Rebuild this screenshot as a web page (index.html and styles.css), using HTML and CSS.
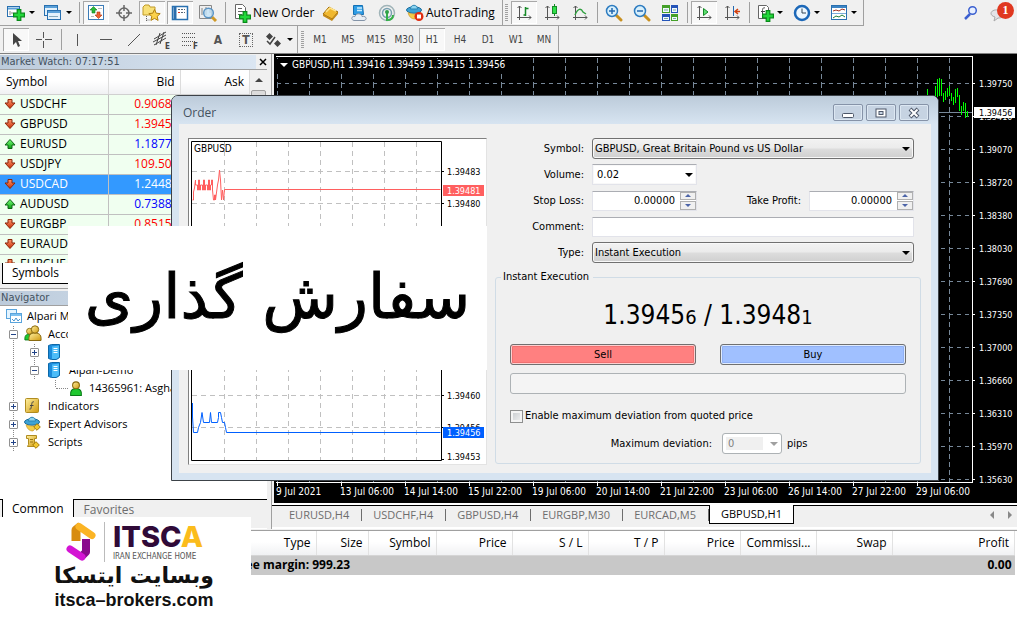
FILE: index.html
```html
<!DOCTYPE html>
<html lang="en">
<head>
<meta charset="utf-8">
<title>Trading terminal</title>
<link rel="stylesheet" href="styles.css">
</head>
<body>
<svg class="defs" aria-hidden="true">
  <defs>
    <linearGradient id="gRed" x1="0" y1="0" x2="0" y2="1"><stop offset="0" stop-color="#ff9a70"/><stop offset="1" stop-color="#c42c04"/></linearGradient>
    <linearGradient id="gGreen" x1="0" y1="0" x2="0" y2="1"><stop offset="0" stop-color="#7dff7d"/><stop offset="1" stop-color="#08a010"/></linearGradient>
    <linearGradient id="gGold" x1="0" y1="0" x2="1" y2="1"><stop offset="0" stop-color="#fff0a0"/><stop offset="1" stop-color="#d09a10"/></linearGradient>
    <symbol id="down" viewBox="0 0 12 12"><path d="M4 1.500h4v3.500h3L6 10.500 1 5h3z" fill="url(#gRed)" stroke="#8c2408"/></symbol>
    <symbol id="up" viewBox="0 0 12 12"><path d="M4 10.500h4V7h3L6 1.500 1 7h3z" fill="url(#gGreen)" stroke="#0a6414"/></symbol>
    <symbol id="plus" viewBox="0 0 10 10"><path d="M3.500.5h3v3h3v3h-3v3h-3v-3h-3v-3h3z" fill="#22d83a" stroke="#078a18"/></symbol>
    <symbol id="axes" viewBox="0 0 18 18"><path d="M4.500 2v14M2 13.500h14M2.500 4l2-2 2 2M14 11.500l2 2-2 2" fill="none" stroke="#555"/></symbol>
    <symbol id="lens" viewBox="0 0 18 18"><path d="M11 11l5 5" stroke="#c89020" stroke-width="3" stroke-linecap="round"/><circle cx="7" cy="7" r="5.500" fill="#d8f0fc" stroke="#2e7cc0" stroke-width="1.500"/></symbol>
    <symbol id="man" viewBox="0 0 12 14"><path d="M1 13.500c-.5-4 1-6.500 5-6.500s5.500 2.500 5 6.500z" fill="#20c830" stroke="#0a7a18"/><circle cx="6" cy="4" r="3.200" fill="url(#gGold)" stroke="#8a6a10"/></symbol>
    <symbol id="server" viewBox="0 0 14 16"><path d="M1.500 1.500l3-1h8v13l-3 2h-5l-3-1z" fill="#1c8cdc" stroke="#0c68a8"/><path d="M5 2.500l7-1v11.500l-3 2H5z" fill="#4cbcf8"/><path d="M6.500 4.500h4M6.500 6.500h4M6.500 8.500h4" stroke="#fff"/></symbol>
    <symbol id="ufo" viewBox="0 0 18 16"><ellipse cx="8" cy="6" rx="7.500" ry="3.200" fill="#3ea2d4" stroke="#1a6c9c"/><path d="M4.500 5c0-5 7-5 7 0z" fill="#8cd4f0" stroke="#2a84b4"/><path d="M2 8.500c1 4 3 6.500 7 6.500l6-6.500c-4 2-9 2-13 0z" fill="#f4cc48" stroke="#c09020" stroke-width=".6"/></symbol>
    <symbol id="diamond" viewBox="0 0 8 8"><path d="M4 .7L7.300 4 4 7.300.7 4z" fill="#f2c830" stroke="#a07808"/></symbol>
  </defs>
</svg>

<header class="toolbars">
  <div class="toolbar main-bar">
    <div class="strip">
      <button class="tool drop" aria-label="New chart"><svg width="20" height="18"><rect x="1.500" y="2.500" width="12" height="10" fill="#fff" stroke="#2870b0"/><path d="M2 4.500h11" stroke="#5aa0d8" stroke-width="2"/><path d="M4 7v4M6 8v2" stroke="#888"/><use href="#plus" x="7" y="5" width="12" height="12"/></svg></button>
      <button class="tool drop" aria-label="Profiles"><svg width="20" height="18"><rect x="1.500" y="1.500" width="13" height="10" fill="#e4f2fc" stroke="#2870b0"/><path d="M2 3h12" stroke="#5aa0d8" stroke-width="2"/><rect x="4.500" y="6.500" width="13" height="9" fill="#e4f2fc" stroke="#2870b0"/><path d="M5 8h12" stroke="#5aa0d8" stroke-width="2"/><path d="M6 12.500h9" stroke="#8ab"/></svg></button>
      <span class="sep"></span>
      <button class="tool pressed" aria-label="Market Watch"><svg width="18" height="18"><rect x="1.500" y="1.500" width="15" height="14" fill="#fff" stroke="#3c7cb8"/><path d="M6.500 2.500L10 6H8v3H5V6H3z" fill="#2ab83a" stroke="#108020" stroke-width=".6"/><path d="M11.500 14.500L8 11h2V8h3v3h2z" fill="#f06030" stroke="#b03008" stroke-width=".6"/><path d="M11 4.500h4M4 12.500h3" stroke="#bbb"/></svg></button>
      <button class="tool" aria-label="Data Window"><svg width="18" height="18" fill="none" stroke="#666"><circle cx="9" cy="9" r="5" stroke-width="1.500"/><path d="M9 1v6M9 11v6M1 9h6M11 9h6" stroke-width="1.500"/></svg></button>
      <button class="tool pressed" aria-label="Navigator"><svg width="20" height="18"><path d="M1 3l2-2h4l1 2h5v8H1z" fill="#f8e078" stroke="#c09a28"/><path d="M4.500 12v5M4.500 16h3" stroke="#666" stroke-dasharray="1 1"/><path d="M12.500 5.500l1.700 3.700 4 .4-3 2.800.9 4-3.600-2-3.600 2 .9-4-3-2.800 4-.4z" fill="#fcd24c" stroke="#b08010"/></svg></button>
      <button class="tool pressed" aria-label="Terminal"><svg width="18" height="18"><rect x="1.500" y="2.500" width="15" height="13" fill="#fff" stroke="#2870b0" stroke-width="1.500"/><path d="M4 3v12" stroke="#2a6cac" stroke-width="3"/><path d="M7 5.500h7M7 8.500h7" stroke="#567" stroke-dasharray="2 1"/><path d="M7 8.500h2" stroke="#e03020"/></svg></button>
      <button class="tool" aria-label="Strategy Tester"><svg width="20" height="18"><path d="M1.500 1.500h12v13h-12zM4 4v7M8 3v8M12 4v5" fill="#eee" stroke="#888"/><path d="M14 13l4 4" stroke="#d09a28" stroke-width="3"/><circle cx="10.500" cy="9" r="4.800" fill="#c4e4f8" fill-opacity=".8" stroke="#5a94c4" stroke-width="1.500"/></svg></button>
      <span class="sep"></span>
      <button class="tool labelled order-tool"><svg width="18" height="20"><path d="M2.500 1.500h7l3 3v11h-10z" fill="#fff" stroke="#666"/><path d="M5 5.500h4M5 8.500h5M5 11.500h4" stroke="#666"/><use href="#plus" x="6" y="8" width="12" height="12"/></svg>New Order</button>
      <button class="tool" aria-label="MetaEditor"><svg width="20" height="18"><path d="M2 10l6-7 9 5-6 7z" fill="#f0b830" stroke="#a06c08"/><path d="M2 10l9 5v2l-9-5zM11 15l6-7v2l-6 7z" fill="#c48a18"/><path d="M5 8l4-4 6 3" fill="none" stroke="#ffe48c" stroke-width="1.500"/></svg></button>
      <button class="tool" aria-label="Virtual hosting"><svg width="18" height="18"><path d="M3.500 1.500h9l1 9h-10z" fill="#2e9ce4" stroke="#1470b4"/><path d="M7 4h5M7 6.500h5" stroke="#c8ecff" stroke-width="1.500"/><path d="M4 16.500c-4-1-2-5 1-4 1-4 7-3 7 0 4-1 6 3 2 4z" fill="#e8eef4" stroke="#8494a8"/></svg></button>
      <button class="tool" aria-label="Signals"><svg width="18" height="18" fill="none"><circle cx="9" cy="9" r="7.500" stroke="#a0b4b8" stroke-width="1.500"/><circle cx="9" cy="9" r="4.500" stroke="#78a0b0" stroke-width="1.500"/><path d="M9 8v8c4 0 6-2 6-5" stroke="#34b048" stroke-width="2"/><circle cx="9" cy="8" r="2" fill="#30a048"/></svg></button>
      <button class="tool labelled auto-tool"><svg width="18" height="18"><use href="#ufo" width="18" height="16"/><circle cx="13" cy="12.500" r="4.500" fill="#e02c10"/><rect x="11" y="10.500" width="4" height="4" fill="#fff"/></svg>AutoTrading</button>
    </div>
    <div class="strip">
      <span class="grip"></span>
      <button class="tool pressed" aria-label="Bar chart"><svg width="18" height="18"><use href="#axes" width="18" height="18"/><path d="M10.500 3v9M10.500 11h-2M10.500 4.500h3" stroke="#168a28" fill="none" stroke-width="1.500"/></svg></button>
      <button class="tool" aria-label="Candlesticks"><svg width="18" height="18"><use href="#axes" width="18" height="18"/><path d="M11.500 0v12" stroke="#168a28"/><rect x="9.500" y="2.500" width="4" height="7" fill="#2ee048" stroke="#168a28"/></svg></button>
      <button class="tool" aria-label="Line chart"><svg width="18" height="18"><use href="#axes" width="18" height="18"/><path d="M4 11c3-7 6-7 8-3l3 2" stroke="#30a040" stroke-width="1.500" fill="none"/></svg></button>
      <span class="sep"></span>
      <button class="tool" aria-label="Zoom in"><svg width="18" height="18"><use href="#lens" width="18" height="18"/><path d="M4 7h6M7 4v6" stroke="#2468b0" stroke-width="1.500"/></svg></button>
      <button class="tool" aria-label="Zoom out"><svg width="18" height="18"><use href="#lens" width="18" height="18"/><path d="M4 7h6" stroke="#2468b0" stroke-width="1.500"/></svg></button>
      <button class="tool" aria-label="Tile windows"><svg width="18" height="18"><path d="M1 1h8v8H1zM10 10h7v7h-7z" fill="#44a028"/><path d="M10 1h7v8h-7zM1 10h8v7H1z" fill="#2454b8"/><path d="M2 4h6v4H2zM11 4h5v4h-5zM2 13h6v3H2zM11 13h5v3h-5z" fill="#f0f8ff"/><path d="M3 6h4M12 6h3M3 14.500h4M12 14.500h3" stroke="#7a9"/></svg></button>
      <span class="sep"></span>
      <button class="tool pressed" aria-label="Auto scroll"><svg width="18" height="18"><use href="#axes" width="18" height="18"/><path d="M8.500 4.500l4.500 3.500-4.500 3.500z" fill="#5ce070" stroke="#168a28"/></svg></button>
      <button class="tool" aria-label="Chart shift"><svg width="18" height="18"><use href="#axes" width="18" height="18"/><path d="M10.500 2v10" stroke="#2468b0"/><path d="M17 7.500h-4M15 5l-3 2.500 3 2.500" stroke="#d04010" fill="none" stroke-width="1.500"/></svg></button>
      <span class="sep"></span>
      <button class="tool drop" aria-label="Indicators"><svg width="18" height="18"><path d="M2.500 1.500h8l2 2v11h-10z" fill="#fff" stroke="#666"/><path d="M9 4c-2-1-2.500 1-2.500 3v5M5 7.500h4" fill="none" stroke="#444"/><use href="#plus" x="6" y="6" width="12" height="12"/></svg></button>
      <button class="tool drop" aria-label="Periods"><svg width="18" height="18"><circle cx="9" cy="9" r="7" fill="#eef8ff" stroke="#1c68b8" stroke-width="2.500"/><path d="M9 4.500V9h4" fill="none" stroke="#345"/></svg></button>
      <button class="tool drop" aria-label="Templates"><svg width="18" height="18"><rect x="1.500" y="1.500" width="15" height="14" fill="#fff" stroke="#2870b0"/><path d="M2 3h14" stroke="#3c84c4" stroke-width="2"/><path d="M3 7l3-1 3 1 3-2 3 1" fill="none" stroke="#a03020"/><path d="M2 9.500h14" stroke="#7aacd8"/><path d="M3 14l3-2 3 1 3-2 3 2" fill="none" stroke="#208038"/></svg></button>
    </div>
    <div class="status-tools">
      <button class="tool" aria-label="Search"><svg width="16" height="16"><path d="M2 14l5-5" stroke="#3c60d0" stroke-width="2.500"/><circle cx="9.500" cy="5.500" r="3.800" fill="#e8f0ff" stroke="#3c60d0" stroke-width="1.500"/></svg></button>
      <button class="tool notice" aria-label="Notifications"><svg width="18" height="18"><path d="M5 17l1-4C-1 11 2 5 9 6s9 8 0 8z" fill="#e4e4e8" stroke="#aaa"/></svg><b class="badge">1</b></button>
    </div>
  </div>
  <div class="toolbar draw-bar">
    <div class="strip">
      <button class="tool pressed" aria-label="Cursor"><svg width="18" height="18"><path d="M6 2v12l3-3 2 5 2-1-2-5h4z" fill="#444"/></svg></button>
      <button class="tool" aria-label="Crosshair"><svg width="18" height="18"><path d="M8.500 1v6M8.500 10v7M1 8.500h6M10 8.500h7" stroke="#555"/></svg></button>
      <span class="sep"></span>
      <button class="tool" aria-label="Vertical line"><svg width="18" height="18"><path d="M8.500 3v12" stroke="#555"/></svg></button>
      <button class="tool" aria-label="Horizontal line"><svg width="18" height="18"><path d="M3 8.500h12" stroke="#555"/></svg></button>
      <button class="tool" aria-label="Trendline"><svg width="18" height="18"><path d="M3 15L15 3" stroke="#555"/></svg></button>
      <button class="tool" aria-label="Equidistant channel"><svg width="20" height="20"><path d="M2 9L14 2M2 15L14 8M4 15L8 3M8 14l4-12M1 12l13-7" stroke="#444"/><text class="glyph" x="13" y="19">E</text></svg></button>
      <button class="tool" aria-label="Fibonacci retracement"><svg width="20" height="20"><path d="M2 3.500h14M2 7.500h14M2 11.500h14M2 15.500h9" stroke="#555" stroke-dasharray="1 1"/><text class="glyph" x="13" y="19">F</text></svg></button>
      <button class="tool text-tool" aria-label="Text">A</button>
      <button class="tool text-tool" aria-label="Text label"><span class="dotted">T</span></button>
      <button class="tool drop" aria-label="Arrows"><svg width="20" height="18"><path d="M5.500 2l3.500 3.500L5.500 9 2 5.500zM13.500 9l3.500 3.500-3.500 3.500-3.500-3.500z" fill="#444"/><path d="M3 10l3 3 5-7" stroke="#444" fill="none" stroke-width="1.500"/></svg></button>
    </div>
    <div class="strip periods">
      <span class="grip"></span>
      <button class="tool">M1</button><button class="tool">M5</button><button class="tool">M15</button><button class="tool">M30</button><button class="tool pressed">H1</button><button class="tool">H4</button><button class="tool">D1</button><button class="tool">W1</button><button class="tool">MN</button>
    </div>
  </div>
</header>

<main class="workspace">
  <aside class="side">
    <section class="watch">
      <div class="panel-title"><span>Market Watch: 07:17:51</span><button class="close" aria-label="Close"><svg width="8" height="8"><path d="M1 1l6 6M7 1L1 7" stroke="#000" stroke-width="1.500"/></svg></button></div>
      <div class="watch-body">
        <table class="quotes">
          <thead><tr><th>Symbol</th><th>Bid</th><th>Ask</th></tr></thead>
          <tbody>
            <tr><td><svg><use href="#down"/></svg>USDCHF</td><td class="fall">0.90682</td><td class="fall"></td></tr>
            <tr><td><svg><use href="#down"/></svg>GBPUSD</td><td class="fall">1.39456</td><td class="fall"></td></tr>
            <tr><td><svg><use href="#up"/></svg>EURUSD</td><td class="rise">1.18773</td><td class="rise"></td></tr>
            <tr><td><svg><use href="#down"/></svg>USDJPY</td><td class="fall">109.504</td><td class="fall"></td></tr>
            <tr class="selected"><td><svg><use href="#down"/></svg>USDCAD</td><td>1.24483</td><td></td></tr>
            <tr><td><svg><use href="#up"/></svg>AUDUSD</td><td class="rise">0.73887</td><td class="rise"></td></tr>
            <tr><td><svg><use href="#down"/></svg>EURGBP</td><td class="fall">0.85152</td><td class="fall"></td></tr>
            <tr><td><svg><use href="#down"/></svg>EURAUD</td><td class="fall"></td><td class="fall"></td></tr>
            <tr><td><svg><use href="#down"/></svg>EURCHF</td><td class="fall"></td><td class="fall"></td></tr>
          </tbody>
        </table>
        <div class="scroll"><i class="scroll-up"></i><i class="thumb"></i></div>
      </div>
      <div class="side-tabs"><button class="side-tab active">Symbols</button></div>
    </section>
    <section class="navigator">
      <div class="panel-title"><span>Navigator</span></div>
      <ul class="tree">
        <li><svg class="node" width="18" height="16"><rect x="1.500" y="1.500" width="10" height="9" fill="#e4f4ff" stroke="#5aa4dc"/><rect x="5.500" y="5.500" width="11" height="9" fill="#fff" stroke="#5aa4dc"/><path d="M6 7h10" stroke="#7cc0f0" stroke-width="2"/><path d="M7 11l2 2 2-3 2 3 2-2" stroke="#4a94d0" fill="none"/></svg><span>Alpari MT4</span></li>
        <li class="l1"><i class="box minus"></i><svg class="node" width="18" height="18"><use href="#man" x="0" y="2" width="11" height="14"/><path d="M5 15.500c-.5-5 1-7.500 6-7.500s6.500 2.500 6 7.500z" fill="url(#gGold)" stroke="#8a6a10"/><circle cx="11" cy="4.500" r="3.700" fill="url(#gGold)" stroke="#8a6a10"/></svg><span>Accounts</span></li>
        <li class="l2"><i class="box"></i><svg class="node" width="14" height="16"><use href="#server" width="14" height="16"/></svg><span></span></li>
        <li class="l2"><i class="box minus"></i><svg class="node" width="14" height="16"><use href="#server" width="14" height="16"/></svg><span>Alpari-Demo</span></li>
        <li class="l3"><svg class="node" width="14" height="15"><use href="#man" width="14" height="15"/></svg><span>14365961: Asghar</span></li>
        <li class="l1"><i class="box"></i><svg class="node" width="18" height="16"><rect x="1.500" y=".5" width="13" height="14" rx="1" fill="url(#gGold)" stroke="#b08c20"/><path d="M10 4c-2-1-2 1-2.500 3.500S7 12 5.500 11M6 7.500h3.500" fill="none" stroke="#444"/></svg><span>Indicators</span></li>
        <li class="l1"><i class="box"></i><svg class="node" width="18" height="16"><use href="#ufo" width="18" height="16"/><use href="#diamond" x="9" y="7" width="8" height="8"/></svg><span>Expert Advisors</span></li>
        <li class="l1"><i class="box"></i><svg class="node" width="18" height="16"><path d="M2.500 1.500h10v3h-2v8h-7l1-2v-6h-2z" fill="url(#gGold)" stroke="#b08c20"/><path d="M6 5.500h3M6 8h3" stroke="#987414"/><use href="#diamond" x="8" y="7" width="8" height="8"/></svg><span>Scripts</span></li>
      </ul>
      <div class="side-tabs bottom"><button class="side-tab active">Common</button><button class="side-tab">Favorites</button></div>
    </section>
  </aside>

  <section class="chart-area">
    <div class="chart">
      <div class="plot">
        <svg class="grid-lines" width="100%" height="100%">
          <defs><pattern id="cell" width="32" height="33" patternUnits="userSpaceOnUse" x="1" y="26"><path d="M0 .5h32" stroke="#778899" stroke-dasharray="4 4"/><path d="M.5 0v33" stroke="#778899" stroke-dasharray="5 3"/></pattern></defs>
          <rect width="100%" height="100%" fill="url(#cell)"/>
        </svg>
        <svg class="bars" width="48" height="80"><path d="M0 55.500h48" stroke="#778899"/><path d="M3.500 32v8M11.500 29v18M13.500 22v18M15.500 21v18M17.500 22v17M19.500 36v9M21.500 34v9M23.500 31v9M25.500 29v10M27.500 36v8M29.500 40v8M31.500 32v14M33.500 31v9M35.500 38v16M37.500 49v9M39.500 45v9M41.500 46v15M43.500 54v6" stroke="#0f0"/></svg>
        <div class="chart-title"><i class="tri"></i><span>GBPUSD,H1 1.39416 1.39459 1.39415 1.39456</span></div>
      </div>
      <ol class="prices"><li>1.39750</li><li>1.39410</li><li>1.39070</li><li>1.38720</li><li>1.38380</li><li>1.38030</li><li>1.37690</li><li>1.37350</li><li>1.37000</li><li>1.36660</li><li>1.36310</li><li>1.35970</li><li>1.35630</li><li class="current">1.39456</li></ol>
      <ol class="times"><li>9 Jul 2021</li><li>13 Jul 06:00</li><li>14 Jul 14:00</li><li>15 Jul 22:00</li><li>19 Jul 06:00</li><li>20 Jul 14:00</li><li>21 Jul 22:00</li><li>23 Jul 06:00</li><li>26 Jul 14:00</li><li>27 Jul 22:00</li><li>29 Jul 06:00</li></ol>
    </div>
    <nav class="chart-tabs">
      <button>EURUSD,H4</button><button>USDCHF,H4</button><button>GBPUSD,H4</button><button>EURGBP,M30</button><button>EURCAD,M5</button><button class="active">GBPUSD,H1</button>
      <span class="tab-arrows"><i class="left"></i><i class="right"></i></span>
    </nav>
  </section>
</main>

<section class="terminal">
  <table class="trades">
    <colgroup><col class="c-first"><col class="c-size"><col class="c-symbol"><col class="c-num"><col class="c-num"><col class="c-num"><col class="c-num"><col class="c-num"><col class="c-num"><col></colgroup>
    <thead><tr><th>Type</th><th>Size</th><th>Symbol</th><th>Price</th><th>S / L</th><th>T / P</th><th>Price</th><th>Commissi...</th><th>Swap</th><th>Profit</th></tr></thead>
    <tbody><tr><td colspan="2">Free margin: 999.23</td><td colspan="7"></td><td>0.00</td></tr></tbody>
  </table>
</section>

<section class="dialog" role="dialog" aria-labelledby="dialog-title">
  <header class="dialog-bar">
    <h2 id="dialog-title">Order</h2>
    <button aria-label="Minimize"><svg width="14" height="12"><rect x="1.500" y="6.500" width="11" height="4" rx="1" fill="#fff" stroke="#4c5668"/></svg></button>
    <button aria-label="Maximize"><svg width="14" height="12"><rect x="2" y="2" width="10" height="8" fill="#fff" stroke="#4c5668"/><rect x="5" y="4.500" width="4" height="3" fill="#c8d4e4" stroke="#4c5668"/></svg></button>
    <button aria-label="Close"><svg width="14" height="12"><path d="M3 2l8 8M11 2l-8 8" stroke="#4c5668" stroke-width="4"/><path d="M3.500 2.500l7 7M10.500 2.500l-7 7" stroke="#fff" stroke-width="2"/></svg></button>
  </header>
  <div class="dialog-body">
    <figure class="ticks">
      <svg width="297" height="324">
        <g stroke="#c0c0c0" stroke-dasharray="5 4" fill="none">
          <path d="M35.500 3v318M67.500 3v318M99.500 3v318M131.500 3v318M163.500 3v318M195.500 3v318M227.500 3v318"/>
          <path d="M3 32.500h249M3 64.500h249M3 96.500h249M3 128.500h249M3 160.500h249M3 192.500h249M3 224.500h249M3 256.500h249M3 288.500h249"/>
        </g>
        <path d="M2.500 2.500h250v319H2.500zM252 32.500h3M252 64.500h3M252 256.500h3M252 288.500h3M252 320.500h3" fill="none" stroke="#000"/>
        <path d="M3.500 61h1v-8l1-4 1-8v5h2v5h1V41h1v10h1v-5h2v5h1V41h1v10h1v-5h2v5h1V41h1v10h1v-5h1V41h1v10l1 10h1v-5h1v5l2-15 1-5 1-10 1 10 1 20 1-10 1 10 1-10.500h216" fill="none" stroke="#ff5f5f" stroke-linejoin="bevel"/>
        <path d="M3.500 264v14l1 15.500h4l1-5 2-5 1.500-10 1.500 10h6l1-10 1 10h6l1-5v-5h2l1 5 1 5h2l1 5 1 5h214" fill="none" stroke="#0060ff"/>
        <g class="axis"><text class="pair" x="5" y="13">GBPUSD</text><text x="258" y="36">1.39483</text><text x="258" y="68">1.39480</text><text x="258" y="260">1.39460</text><text x="258" y="292">1.39456</text><text x="258" y="321">1.39453</text></g>
        <rect x="254" y="46" width="41" height="11" fill="#ff5f5f"/><rect x="254" y="288" width="41" height="11" fill="#0060ff"/>
        <g class="axis on"><text x="258" y="55">1.39481</text><text x="258" y="297">1.39456</text></g>
      </svg>
    </figure>
    <form class="order" onsubmit="return false">
      <div class="fields">
        <label for="symbol">Symbol:</label>
        <span class="combo wide"><select id="symbol"><option>GBPUSD, Great Britain Pound vs US Dollar</option></select></span>
        <label for="volume">Volume:</label>
        <span class="combo plain"><select id="volume"><option>0.02</option></select></span>
        <label class="first" for="sl">Stop Loss:</label>
        <span class="spin"><input id="sl" value="0.00000"><span class="steps"><i></i><i></i></span></span>
        <label for="tp">Take Profit:</label>
        <span class="spin"><input id="tp" value="0.00000"><span class="steps"><i></i><i></i></span></span>
        <label for="comment">Comment:</label>
        <input class="wide line" id="comment">
        <label for="type">Type:</label>
        <span class="combo wide"><select id="type"><option>Instant Execution</option></select></span>
      </div>
      <fieldset class="execution">
        <legend>Instant Execution</legend>
        <p class="price">1.3945<small>6</small> / 1.3948<small>1</small></p>
        <div class="deal"><button class="sell">Sell</button><button class="buy">Buy</button></div>
        <output class="message"></output>
        <label class="check"><input type="checkbox">Enable maximum deviation from quoted price</label>
        <div class="deviation"><label for="dev">Maximum deviation:</label><span class="combo off"><select id="dev" disabled><option>0</option></select></span><span>pips</span></div>
      </fieldset>
    </form>
  </div>
</section>

<div class="caption" lang="fa" dir="rtl">سفارش گذاری</div>

<div class="brand">
  <div class="brand-row">
    <svg width="32" height="40"><path d="M11 19V8l5-4" fill="none" stroke="#d88c10" stroke-width="9" stroke-linejoin="round" stroke-linecap="butt"/><path d="M14 4.500l13 9" stroke="#fbb424" stroke-width="7" stroke-linecap="round"/><path d="M21 17v13l-5 5" fill="none" stroke="#8a0a8c" stroke-width="8" stroke-linejoin="round"/><path d="M5 27l12 8" stroke="#d414d4" stroke-width="7" stroke-linecap="round"/></svg>
    <div class="brand-words"><b>ITSC<span>A</span></b><small>IRAN EXCHANGE HOME</small></div>
  </div>
  <p class="brand-fa" lang="fa" dir="rtl">وبسایت ایتسکا</p>
  <p class="brand-url">itsca–brokers.com</p>
</div>
</body>
</html>
```
FILE: styles.css
```css
* { box-sizing: border-box; }
body {
  margin: 0; min-height: 100vh; position: relative; overflow: hidden;
  display: flex; flex-direction: column; background: #f0f0f0; color: #000;
  font: 12px/18px "Open Sans", "Noto Sans", sans-serif;
}
button, input, select { font: inherit; color: inherit; margin: 0; }
button { padding: 0; border: 0; background: none; }
ul, ol, p, h2, figure { margin: 0; padding: 0; list-style: none; }
.defs { position: absolute; width: 0; height: 0; }

/* toolbars */
.toolbars { background: #f0f0f0; border-bottom: 1px solid #808080; }
.toolbar { display: flex; height: 26px; }
.draw-bar { height: 27px; }
.strip { display: flex; align-items: center; padding-left: 2px; border-right: 1px solid #a0a0a0; border-bottom: 1px solid #a0a0a0; }
.draw-bar .strip { border-bottom: 0; }
.draw-bar .strip:last-child { padding-left: 3px; }
.tool { width: 28px; height: 25px; display: flex; align-items: center; justify-content: center; flex: none; }
.tool.pressed { width: 26px; height: 23px; margin: 0 1px; background: #f8f8f8; box-shadow: inset 1px 1px #a8a8a8, inset -1px -1px #fff; }
.tool.drop { width: 37px; padding-left: 4px; justify-content: flex-start; gap: 3px; }
.tool.drop::after { content: ""; border: 3px solid transparent; border-top-color: #000; border-bottom: 0; }
.tool.labelled { width: auto; justify-content: flex-start; padding-left: 5px; gap: 2px; }
.order-tool { min-width: 89px; }
.auto-tool { min-width: 101px; }
.sep { width: 6px; height: 21px; background: linear-gradient(#a0a0a0, #a0a0a0) 3px 0 / 1px 100% no-repeat; }
.grip { width: 3px; height: 18px; margin: 0 2px 0 0; background: repeating-linear-gradient(#a0a0a0 0 1px, transparent 1px 2px); }
.status-tools { display: flex; margin-left: auto; }
.notice { position: relative; width: 32px; justify-content: flex-start; padding-left: 4px; }
.badge { position: absolute; right: 3px; top: 2px; width: 17px; height: 17px; border-radius: 50%; background: #e03820; color: #fff; font: bold 12px/17px "Liberation Serif", serif; text-align: center; }
.glyph { font: bold 8px "DejaVu Sans Condensed", sans-serif; fill: #444; }
.text-tool { color: #555; font: bold 12px "DejaVu Sans Condensed", sans-serif; }
.dotted { border: 1px dotted #666; padding: 0 2px; line-height: 12px; }
.periods .tool { font: 10px "DejaVu Sans Condensed", sans-serif; color: #444; }

/* side panels */
.workspace { display: grid; grid-template-columns: 272px 1fr; }
.side { display: flex; flex-direction: column; padding-right: 4px; border-right: 1px solid #a0a0a0; }
.panel-title { display: flex; justify-content: space-between; align-items: center; height: 16px; padding-right: 0; border-bottom: 1px solid #a0a0a0; font: 11px/14px "DejaVu Sans Condensed", sans-serif; color: #44525f; }
.panel-title span { flex: 1; padding-left: 1px; background: linear-gradient(90deg, #bccbdb, #dbe6f2); }
.close { width: 11px; height: 14px; display: grid; place-items: center end; }
.watch-body { display: flex; height: 193px; overflow: hidden; background: #fff; }
.quotes { flex: 1; table-layout: fixed; border-collapse: collapse; align-self: flex-start; }
.quotes th { height: 24px; padding: 0 5px; text-align: right; font-weight: 400; background: linear-gradient(#fff 45%, #f0f1f3); border-right: 1px solid #dcdcdc; border-bottom: 1px solid #d0d0d0; }
.quotes th:first-child { width: 108px; padding-left: 6px; text-align: left; }
.quotes th:nth-child(2) { width: 72px; }
.quotes td { height: 20px; padding: 0 1px; line-height: 18px; background: #f0fff0; border-right: 1px solid #c0c0c0; border-bottom: 1px solid #c0c0c0; text-align: right; }
.quotes td:first-child { text-align: left; padding-left: 4px; }
.quotes svg { width: 12px; height: 12px; margin-right: 4px; vertical-align: -2px; }
.fall { color: #f00; }
.rise { color: #00f; }
.quotes .selected td { background: #3399ff; color: #fff; }
.scroll { width: 17px; background: #f0f0f0; display: flex; flex-direction: column; align-items: center; }
.scroll-up { margin: 8px 0; border: 4px solid transparent; border-top: 0; border-bottom-color: #444; }
.thumb { width: 15px; height: 60px; border: 1px solid #a0a0a0; border-radius: 2px; background: #dcdcdc; }
.side-tabs { display: flex; height: 26px; padding: 0 0 4px 2px; border-bottom: 1px solid #a0a0a0; }
.side-tab { padding: 0 9px; color: #6d6d6d; }
.side-tab.active { color: #000; background: #fff; border: 1px solid #000; border-top: 0; }
.navigator { flex: 1; display: flex; flex-direction: column; margin-top: 1px; }
.tree { flex: 1; padding-top: 1px; background: #fff; font-size: 11px; }
.tree li { display: flex; align-items: center; gap: 4px; height: 18px; padding-left: 5px; white-space: nowrap; }
.tree .l1 { padding-left: 9px; gap: 6px; background: repeating-linear-gradient(#fff 0 1px, transparent 1px 2px), linear-gradient(#888, #888) 13px 0 / 1px 100% no-repeat; }
.tree .l2, .tree .l3 { padding-left: 30px; gap: 8px; background: repeating-linear-gradient(#fff 0 1px, transparent 1px 2px), linear-gradient(#888, #888) 13px 0 / 1px 100% no-repeat, linear-gradient(#888, #888) 34px 0 / 1px 100% no-repeat; }
.tree .l3 { padding-left: 69px; gap: 6px; background: repeating-linear-gradient(#fff 0 1px, transparent 1px 2px), linear-gradient(#888, #888) 13px 0 / 1px 100% no-repeat, linear-gradient(#888, #888) 55px 0 / 1px 50% no-repeat; }
.tree .l3::before { content: ""; width: 12px; margin: 0 -5px 0 -13px; border-top: 1px dotted #888; }
.node { flex: none; }
.tree .box { width: 9px; height: 9px; border: 1px solid #919191; border-radius: 1px; background: linear-gradient(#248, #248) 1px 3px / 5px 1px no-repeat, linear-gradient(#248, #248) 3px 1px / 1px 5px no-repeat, #fff; }
.tree .box.minus { background: linear-gradient(#248, #248) 1px 3px / 5px 1px no-repeat, #fff; }
.side-tabs.bottom { height: 30px; padding-bottom: 8px; border-bottom: 1px solid #fff; background: linear-gradient(#000, #000) 0 0 / 100% 1px no-repeat; }
.bottom .side-tab { padding: 0 10px; }
.bottom .active { padding: 0 9px; }

/* price chart */
.chart-area { display: flex; flex-direction: column; padding-left: 2px; }
.chart { display: grid; grid-template-columns: 1fr 44px; grid-template-rows: 427px 20px; padding: 2px 0 0 2px; background: #000; color: #fff; font: 10px/12px "DejaVu Sans Condensed", sans-serif; }
.plot { position: relative; border: solid #fff; border-width: 1px 1px 1px 0; }
.grid-lines { display: block; }
.bars { position: absolute; right: 0; top: 0; }
.chart-title { position: absolute; left: 0; top: 2px; padding: 0 4px; display: flex; align-items: center; gap: 4px; background: #000; }
.tri { border: 4px solid transparent; border-top-color: #fff; border-bottom: 0; }
.prices { position: relative; padding-top: 11px; font-size: 9px; }
.prices li { height: 33px; display: flex; align-items: center; gap: 4px; }
.prices li::before { content: ""; width: 2px; border-top: 1px solid #fff; }
.prices .current { position: absolute; top: 51px; left: 1px; height: 11px; width: 41px; padding-left: 5px; background: #fff; color: #000; }
.prices .current::before { display: none; }
.times { grid-column: 1 / 3; display: flex; }
.times li { width: 64px; flex: none; padding-top: 3px; white-space: nowrap; background: linear-gradient(#fff, #fff) 1px 0 / 1px 3px no-repeat; }
.chart-tabs { display: flex; align-items: flex-start; height: 26px; padding-left: 7px; margin-left: -2px; border-top: 2px solid #fff; background: linear-gradient(#000, #000) 0 0 / 100% 1px no-repeat, #f0f0f0; border-bottom: 2px solid #fff; font-size: 11px; }
.chart-tabs button { padding: 0 13px 0 11px; height: 19px; color: #6d6d6d; background: linear-gradient(#6d6d6d, #6d6d6d) right 4px / 1px 12px no-repeat; }
.chart-tabs button:first-child { padding-left: 10px; }
.chart-tabs .active { color: #000; background: #fff; border: 1px solid #000; border-top: 0; padding: 0 11px; }
.tab-arrows { margin: 6px 5px 0 auto; display: flex; gap: 14px; }
.tab-arrows i { border: 4px solid transparent; }
.tab-arrows .left { border-right-color: #888; border-left: 0; }
.tab-arrows .right { border-left-color: #888; border-right: 0; }

/* terminal */
.terminal { flex: 1; margin-top: 1px; padding-right: 2px; border-top: 1px solid #a0a0a0; background: #fff; }
.trades { width: 100%; table-layout: fixed; border-collapse: collapse; }
.trades th { height: 24px; padding: 0 5px; text-align: right; font-weight: 400; background: linear-gradient(#fff 45%, #f0f1f3); border-right: 1px solid #e2e2e2; border-bottom: 1px solid #d5d5d5; }
.trades td { height: 20px; padding: 0 3px; font-weight: 700; text-align: right; background: #c8c8c8; }
.trades td:first-child { padding-right: 18px; }
.c-first { width: 316px; }
.c-size { width: 52px; }
.c-symbol { width: 68px; }
.c-num { width: 76px; }

/* order window */
.dialog { position: absolute; left: 171px; top: 95px; width: 768px; padding: 0 7px 7px; border: 1px solid #3c4248; border-radius: 7px 7px 0 0; background: #d7e4f1; font: 11px/14px "DejaVu Sans Condensed", sans-serif; }
.dialog-bar { display: flex; align-items: flex-start; gap: 3px; height: 28px; margin: 0 -7px; padding: 8px 9px 0 11px; border-radius: 6px 6px 0 0; background: linear-gradient(#bccbda, #d7e4f1); }
.dialog-bar h2 { flex: 1; font: 12px/18px "Open Sans", sans-serif; color: #44525f; }
.dialog-bar button { width: 30px; height: 17px; display: grid; place-items: center; border: 1px solid #8693a8; border-radius: 2px; box-shadow: inset 0 0 0 1px #dce7f2; background: #c6d3e2; }
.dialog-body { display: flex; gap: 8px; padding: 14px 17px 8px 9px; background: #f0f0f0; }
.ticks { width: 299px; height: 327px; border: 1px solid #808080; border-color: #808080 #e3e3e3 #e3e3e3 #808080; background: #fff; }
.ticks svg { display: block; }
.axis { font: 9px "DejaVu Sans Condensed", sans-serif; fill: #000; }
.axis .pair { font-size: 10px; }
.axis.on { fill: #fff; }
.order { flex: 1; min-width: 0; display: flex; flex-direction: column; }
.fields { display: grid; grid-template-columns: 97px minmax(0, 1fr) 112px minmax(0, 1fr); row-gap: 5px; grid-auto-rows: 21px; align-items: center; }
.fields label { text-align: right; padding-right: 8px; }
.fields .first { grid-column: 1; }
.fields .wide { grid-column: 2 / 5; }
.combo { position: relative; display: block; height: 21px; }
.combo select { appearance: none; display: block; width: 100%; height: 100%; padding: 0 2px; border: 1px solid #707070; border-radius: 3px; box-shadow: inset 0 0 0 1px #f8f8f8; background: linear-gradient(#f2f2f2, #ebebeb 48%, #dddddd 52%, #cfcfcf); }
.combo::after { content: ""; position: absolute; right: 4px; top: 9px; border: 4px solid transparent; border-top-color: #000; border-bottom: 0; }
.combo.plain select, .spin, .line { border: 1px solid #e2e3ea; border-top-color: #abadb3; border-radius: 1px; background: #fff; }
.combo.plain select { padding: 0 4px; }
.line { height: 20px; width: 100%; }
.spin { display: flex; height: 20px; padding: 0; }
.spin input { flex: 1; min-width: 0; border: 0; padding: 0 5px; text-align: right; background: none; }
.steps { width: 16px; display: flex; flex-direction: column; gap: 1px; }
.steps i { flex: 1; display: grid; place-items: center; border: 1px solid #b0b0b0; background: #f0f0f0; }
.steps i::after { content: ""; border: 3px solid transparent; border-bottom-color: #4c64a8; border-top: 0; }
.steps i:last-child::after { border: 3px solid transparent; border-top-color: #4c64a8; border-bottom: 0; }
.execution { min-width: 0; margin: 7px -7px 0 0; padding: 0 14px; border: 1px solid #d0dce6; border-radius: 3px; }
.execution legend { margin-left: -9px; padding: 0 4px 0 2px; }
.price { margin-top: 13px; text-align: center; font-size: 26px; line-height: 36px; }
.price small { font-size: 20px; }
.deal { display: grid; grid-template-columns: 1fr 1fr; gap: 24px; margin-top: 9px; }
.deal button { height: 21px; border: 1px solid #707070; border-radius: 3px; }
.deal .sell { background: #ff8080; box-shadow: inset 0 0 0 1px #ffd0d0, inset 0 0 0 2px #f07070; }
.deal .buy { background: #a0c0ff; box-shadow: inset 0 0 0 1px #e0ecff, inset 0 0 0 2px #90b0f4; }
.message { display: block; height: 21px; margin-top: 8px; border: 1px solid #adb2b5; border-radius: 3px; background: #f4f4f4; }
.check { display: flex; align-items: center; gap: 2px; margin-top: 15px; }
.check input { appearance: none; width: 13px; height: 13px; border: 1px solid #8e8f8f; box-shadow: inset 0 0 0 2px #f4f4f4; background: linear-gradient(135deg, #c4c8cc, #f4f4f4); }
.deviation { display: flex; align-items: center; margin: 10px 0 9px 98px; gap: 5px; white-space: nowrap; }
.deviation label { width: 109px; text-align: right; padding-right: 5px; }
.off { width: 60px; }
.off select { color: #808080; opacity: 1; border-color: #adb2b5; box-shadow: inset 0 0 0 3px #fff, inset -18px 0 #fff; background: #f0f0f0; padding: 0 5px; }
.off::after { border-top-color: #a0a0a0; }

/* overlays */
.caption { position: absolute; left: 68px; top: 226px; width: 419px; height: 144px; background: #fff; text-align: center; white-space: nowrap; font: 62px/142px "DejaVu Sans", sans-serif; -webkit-text-stroke: 1px #000; }
.brand { position: absolute; left: 0; top: 517px; width: 251px; height: 93px; padding: 5px 0 0 17px; background: #fff; display: flex; flex-direction: column; align-items: center; color: #111; }
.brand-row { display: flex; gap: 7px; height: 40px; }
.brand-words { display: flex; flex-direction: column; border-left: 1px solid #bbb; padding-left: 8px; }
.brand-words b { font: 800 29px/30px Inter, sans-serif; color: #300a38; }
.brand-words span { color: #fbbc1c; }
.brand-words small { font: 8px/9px "DejaVu Sans Condensed", sans-serif; color: #555; }
.brand-fa { font: bold 22px/28px "DejaVu Sans", sans-serif; }
.brand-url { font: bold 18px/20px "Liberation Sans", sans-serif; }
```
